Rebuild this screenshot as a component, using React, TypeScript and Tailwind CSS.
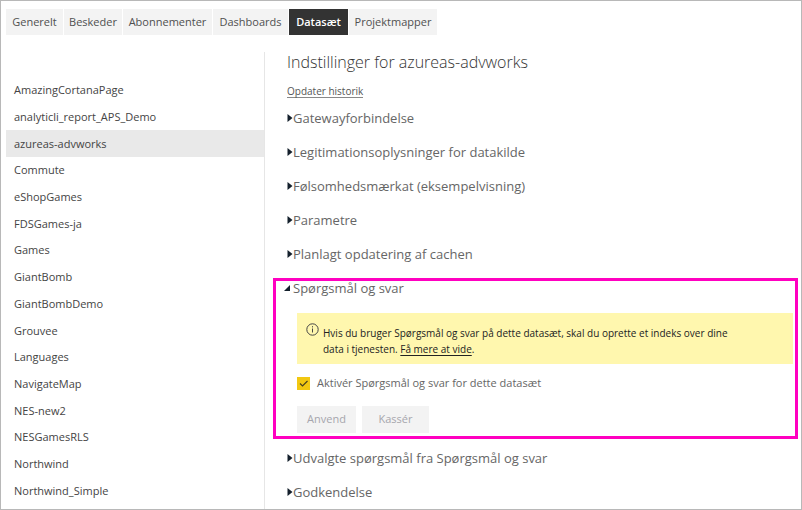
import { useState } from 'react';

const tabs = [
  { label: 'Generelt', width: 'w-[57px]' },
  { label: 'Beskeder', width: 'w-[58px]' },
  { label: 'Abonnementer', width: 'w-[89px]' },
  { label: 'Dashboards', width: 'w-[75px]' },
  { label: 'Datasæt', width: 'w-[59px]' },
  { label: 'Projektmapper', width: 'w-[88px]' },
];

const datasets = [
  'AmazingCortanaPage',
  'analyticli_report_APS_Demo',
  'azureas-advworks',
  'Commute',
  'eShopGames',
  'FDSGames-ja',
  'Games',
  'GiantBomb',
  'GiantBombDemo',
  'Grouvee',
  'Languages',
  'NavigateMap',
  'NES-new2',
  'NESGamesRLS',
  'Northwind',
  'Northwind_Simple',
];

const sectionsBefore = [
  'Gatewayforbindelse',
  'Legitimationsoplysninger for datakilde',
  'Følsomhedsmærkat (eksempelvisning)',
  'Parametre',
  'Planlagt opdatering af cachen',
];

const sectionsAfter = ['Udvalgte spørgsmål fra Spørgsmål og svar', 'Godkendelse'];

function SectionHeader({ title, open = false }: { title: string; open?: boolean }) {
  return (
    <h2>
      <button
        type="button"
        aria-expanded={open}
        className="flex h-[34px] w-full items-center text-left text-[13px] leading-5 whitespace-nowrap text-[#666666]"
      >
        <svg className="-ml-1 h-2 w-[10px] shrink-0" viewBox="0 0 10 8" fill="#14202c" aria-hidden="true">
          {open ? <path d="M7 1v6H1z" /> : <path d="M4.500 0l5 4-5 4z" />}
        </svg>
        <span>{title}</span>
      </button>
    </h2>
  );
}

export default function App() {
  const [enabled, setEnabled] = useState(true);

  return (
    <div className="flex min-h-screen flex-col border border-[#b8b8b8] bg-white pt-2 pl-[5px] font-['Open_Sans','Noto_Sans',sans-serif]">
      <nav className="flex gap-px">
        {tabs.map(({ label, width }) => (
          <button
            key={label}
            type="button"
            className={`${width} h-[26px] shrink-0 text-center text-[11px] leading-4 whitespace-nowrap ${
              label === 'Datasæt' ? 'bg-[#333333] font-semibold text-white' : 'bg-[#f3f3f3] text-[#505050]'
            }`}
          >
            {label}
          </button>
        ))}
      </nav>

      <div className="mt-[17px] flex flex-1">
        <aside className="flex w-[259px] shrink-0 flex-col border-r border-[#e6e6e6] pt-[25px] pb-[5px]">
          <ul className="grid flex-1 auto-rows-fr">
            {datasets.map((name) => (
              <li
                key={name}
                className={
                  name === 'azureas-advworks'
                    ? 'flex items-center bg-[#e9e9e9] px-2 text-[11px] leading-4 text-[#444444]'
                    : 'flex items-center px-2 text-[11px] leading-4 text-[#444444]'
                }
              >
                <a href="#dataset">{name}</a>
              </li>
            ))}
          </ul>
        </aside>

        <main className="min-w-0 flex-1 pr-2 pl-[22px]">
          <h1 className="text-[16px] leading-5 font-light text-[#333333]">Indstillinger for azureas-advworks</h1>
          <div className="mt-3 flex h-[17px] text-[10px] leading-[14px] text-[#555555]">
            <a href="#history" className="h-[14px] border-b border-[#888888]">
              Opdater historik
            </a>
          </div>

          {sectionsBefore.map((title) => (
            <SectionHeader key={title} title={title} />
          ))}

          <section className="relative h-[170px]">
            <SectionHeader title="Spørgsmål og svar" open />
            <div className="ml-[10px] pt-2">
              <div className="flex h-[51px] items-start bg-[#fff7ae] pt-[10px] pl-[9px]">
                <svg className="size-[13px] shrink-0" viewBox="0 0 13 13" fill="none" stroke="#444444" aria-hidden="true">
                  <circle cx="6.500" cy="6.500" r="5.700" />
                  <path d="M6.500 5.500v4M6.500 3.200v1.200" />
                </svg>
                <p className="ml-1 w-[420px] pt-[2px] text-[10px] leading-4 text-[#222222]">
                  Hvis du bruger Spørgsmål og svar på dette datasæt, skal du oprette et indeks over dine data i tjenesten.{' '}
                  <a href="#more" className="underline underline-offset-2">
                    Få mere at vide
                  </a>
                  .
                </p>
              </div>
              <label className="mt-[13px] flex h-[13px] items-center gap-[7px] text-[11px] text-[#666666]">
                <span className="grid size-[13px]">
                  <input
                    type="checkbox"
                    checked={enabled}
                    onChange={(e) => setEnabled(e.target.checked)}
                    className="peer col-start-1 row-start-1 size-[13px] appearance-none bg-[#f2c811]"
                  />
                  <svg
                    className="pointer-events-none invisible col-start-1 row-start-1 size-[13px] peer-checked:visible"
                    viewBox="0 0 13 13"
                    fill="none"
                    stroke="#4a4220"
                    strokeWidth="1.200"
                    aria-hidden="true"
                  >
                    <path d="M3 6.500l2.500 2.500 5-5" />
                  </svg>
                </span>
                Aktivér Spørgsmål og svar for dette datasæt
              </label>
              <div className="mt-4 flex gap-[6px] text-[11px] font-medium text-[#a6a6ad]">
                <button type="button" className="h-[27px] w-[59px] bg-[#f3f3f3]">
                  Anvend
                </button>
                <button type="button" className="h-[27px] w-[67px] bg-[#f3f3f3]">
                  Kassér
                </button>
              </div>
            </div>
            <div className="pointer-events-none absolute top-[7px] -right-[5px] -left-[14px] h-[161px] border-3 border-[#ff00c0]" />
          </section>

          {sectionsAfter.map((title) => (
            <SectionHeader key={title} title={title} />
          ))}
        </main>
      </div>
    </div>
  );
}
